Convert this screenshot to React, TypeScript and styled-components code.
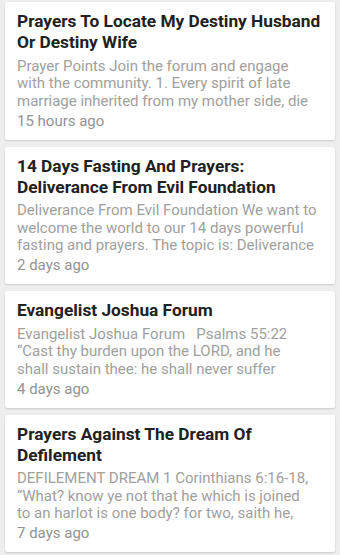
import React from 'react';
import styled, { createGlobalStyle } from 'styled-components';

const GlobalStyle = createGlobalStyle`
  html, body {
    margin: 0;
    padding: 0;
    background: #eeeeee;
  }
  body {
    font-family: Roboto, "Noto Sans", "Liberation Sans", sans-serif;
    -webkit-font-smoothing: antialiased;
  }
`;

const Feed = styled.div`
  display: flex;
  flex-direction: column;
  gap: 7px;
  padding: 2px 5px 4px 5px;
  height: 555px;
  box-sizing: border-box;
  overflow: hidden;
`;

const Card = styled.div`
  background: #ffffff;
  border-radius: 2px;
  box-shadow: 0 1px 2px rgba(0, 0, 0, 0.15), 0 0 1px rgba(0, 0, 0, 0.07);
  padding: 9px 12px 9.5px 12px;
  display: flex;
  flex-direction: column;
`;

const Title = styled.div`
  font-size: 17.3px;
  font-weight: 700;
  line-height: 21px;
  color: #212121;
  margin-bottom: 4.5px;
`;

const Excerpt = styled.div`
  font-size: 15px;
  line-height: 17.5px;
  color: #a0a0a0;
`;

// lines are kept as the feed shows them, already wrapped and cut at three
const Line = styled.span`
  display: block;
  white-space: pre;
  overflow: hidden;
`;

const Stamp = styled.div`
  font-size: 15px;
  line-height: 17.5px;
  color: #939393;
  margin-top: 2.5px;
`;

type Post = {
  title: string[];
  excerpt: string[];
  when: string;
};

const posts: Post[] = [
  {
    title: ['Prayers To Locate My Destiny Husband', 'Or Destiny Wife'],
    excerpt: [
      'Prayer Points Join the forum and engage',
      'with the community. 1. Every spirit of late',
      'marriage inherited from my mother side, die',
    ],
    when: '15 hours ago',
  },
  {
    title: ['14 Days Fasting And Prayers:', 'Deliverance From Evil Foundation'],
    excerpt: [
      'Deliverance From Evil Foundation We want to',
      'welcome the world to our 14 days powerful',
      'fasting and prayers. The topic is: Deliverance',
    ],
    when: '2 days ago',
  },
  {
    title: ['Evangelist Joshua Forum'],
    excerpt: [
      'Evangelist Joshua Forum   Psalms 55:22',
      '\u201cCast thy burden upon the LORD, and he',
      'shall sustain thee: he shall never suffer',
    ],
    when: '4 days ago',
  },
  {
    title: ['Prayers Against The Dream Of', 'Defilement'],
    excerpt: [
      'DEFILEMENT DREAM 1 Corinthians 6:16-18,',
      '\u201cWhat? know ye not that he which is joined',
      'to an harlot is one body? for two, saith he,',
    ],
    when: '7 days ago',
  },
];

const App: React.FC = () => {
  return (
    <>
      <GlobalStyle />
      <Feed>
        {posts.map((p) => (
          <Card key={p.when}>
            <Title>
              {p.title.map((l) => (
                <Line key={l}>{l}</Line>
              ))}
            </Title>
            <Excerpt>
              {p.excerpt.map((l) => (
                <Line key={l}>{l}</Line>
              ))}
            </Excerpt>
            <Stamp>{p.when}</Stamp>
          </Card>
        ))}
      </Feed>
    </>
  );
};

export default App;
